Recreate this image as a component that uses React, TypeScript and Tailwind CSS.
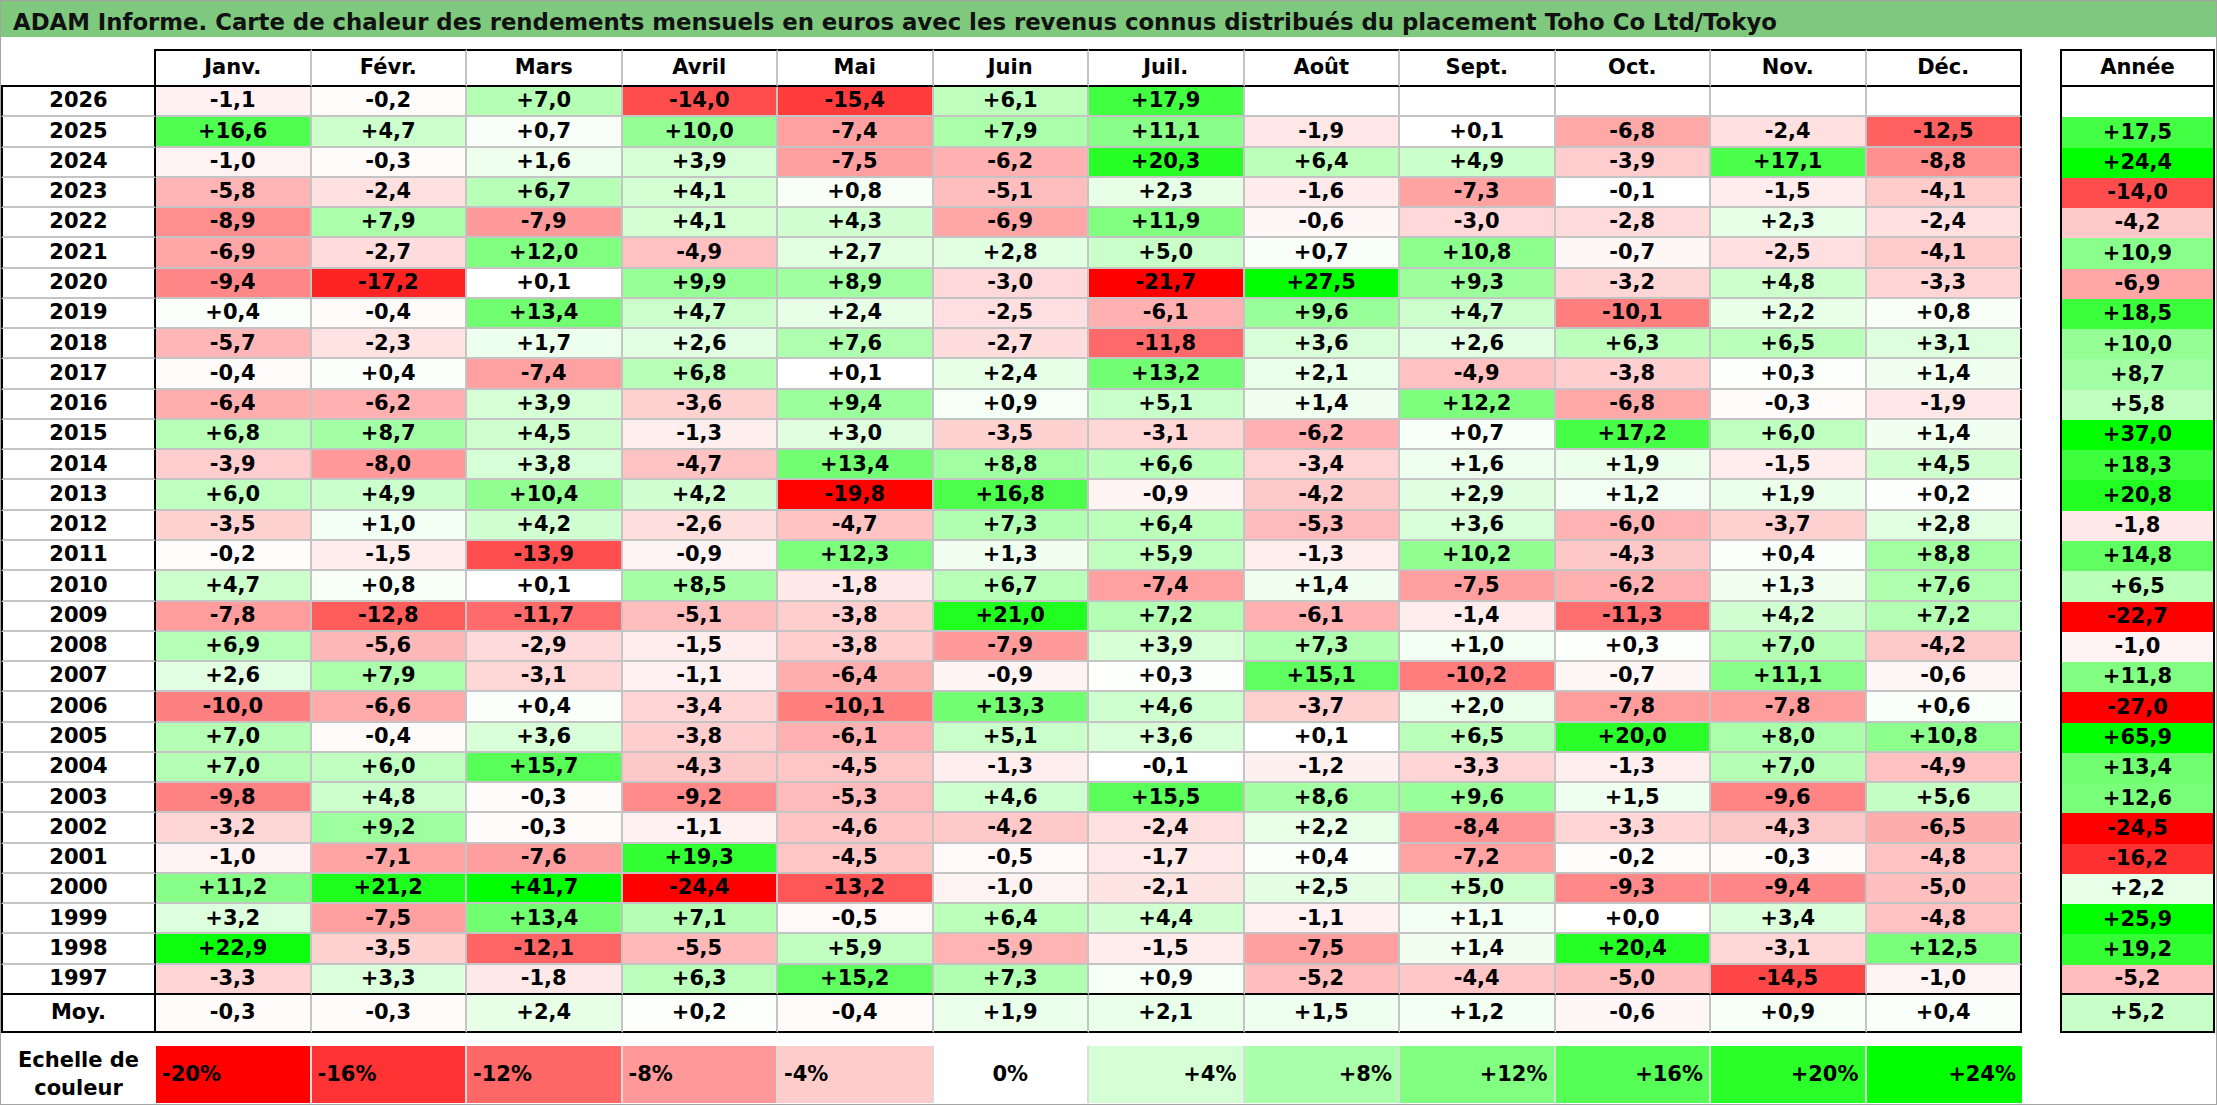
import React from 'react';

const MONTHS = ['Janv.', 'Févr.', 'Mars', 'Avril', 'Mai', 'Juin', 'Juil.', 'Août', 'Sept.', 'Oct.', 'Nov.', 'Déc.'];

// year, 12 monthly values, yearly total ("_" = no data yet)
const ROWS: string[] = [
  '2026 -1,1 -0,2 +7,0 -14,0 -15,4 +6,1 +17,9 _ _ _ _ _ _',
  '2025 +16,6 +4,7 +0,7 +10,0 -7,4 +7,9 +11,1 -1,9 +0,1 -6,8 -2,4 -12,5 +17,5',
  '2024 -1,0 -0,3 +1,6 +3,9 -7,5 -6,2 +20,3 +6,4 +4,9 -3,9 +17,1 -8,8 +24,4',
  '2023 -5,8 -2,4 +6,7 +4,1 +0,8 -5,1 +2,3 -1,6 -7,3 -0,1 -1,5 -4,1 -14,0',
  '2022 -8,9 +7,9 -7,9 +4,1 +4,3 -6,9 +11,9 -0,6 -3,0 -2,8 +2,3 -2,4 -4,2',
  '2021 -6,9 -2,7 +12,0 -4,9 +2,7 +2,8 +5,0 +0,7 +10,8 -0,7 -2,5 -4,1 +10,9',
  '2020 -9,4 -17,2 +0,1 +9,9 +8,9 -3,0 -21,7 +27,5 +9,3 -3,2 +4,8 -3,3 -6,9',
  '2019 +0,4 -0,4 +13,4 +4,7 +2,4 -2,5 -6,1 +9,6 +4,7 -10,1 +2,2 +0,8 +18,5',
  '2018 -5,7 -2,3 +1,7 +2,6 +7,6 -2,7 -11,8 +3,6 +2,6 +6,3 +6,5 +3,1 +10,0',
  '2017 -0,4 +0,4 -7,4 +6,8 +0,1 +2,4 +13,2 +2,1 -4,9 -3,8 +0,3 +1,4 +8,7',
  '2016 -6,4 -6,2 +3,9 -3,6 +9,4 +0,9 +5,1 +1,4 +12,2 -6,8 -0,3 -1,9 +5,8',
  '2015 +6,8 +8,7 +4,5 -1,3 +3,0 -3,5 -3,1 -6,2 +0,7 +17,2 +6,0 +1,4 +37,0',
  '2014 -3,9 -8,0 +3,8 -4,7 +13,4 +8,8 +6,6 -3,4 +1,6 +1,9 -1,5 +4,5 +18,3',
  '2013 +6,0 +4,9 +10,4 +4,2 -19,8 +16,8 -0,9 -4,2 +2,9 +1,2 +1,9 +0,2 +20,8',
  '2012 -3,5 +1,0 +4,2 -2,6 -4,7 +7,3 +6,4 -5,3 +3,6 -6,0 -3,7 +2,8 -1,8',
  '2011 -0,2 -1,5 -13,9 -0,9 +12,3 +1,3 +5,9 -1,3 +10,2 -4,3 +0,4 +8,8 +14,8',
  '2010 +4,7 +0,8 +0,1 +8,5 -1,8 +6,7 -7,4 +1,4 -7,5 -6,2 +1,3 +7,6 +6,5',
  '2009 -7,8 -12,8 -11,7 -5,1 -3,8 +21,0 +7,2 -6,1 -1,4 -11,3 +4,2 +7,2 -22,7',
  '2008 +6,9 -5,6 -2,9 -1,5 -3,8 -7,9 +3,9 +7,3 +1,0 +0,3 +7,0 -4,2 -1,0',
  '2007 +2,6 +7,9 -3,1 -1,1 -6,4 -0,9 +0,3 +15,1 -10,2 -0,7 +11,1 -0,6 +11,8',
  '2006 -10,0 -6,6 +0,4 -3,4 -10,1 +13,3 +4,6 -3,7 +2,0 -7,8 -7,8 +0,6 -27,0',
  '2005 +7,0 -0,4 +3,6 -3,8 -6,1 +5,1 +3,6 +0,1 +6,5 +20,0 +8,0 +10,8 +65,9',
  '2004 +7,0 +6,0 +15,7 -4,3 -4,5 -1,3 -0,1 -1,2 -3,3 -1,3 +7,0 -4,9 +13,4',
  '2003 -9,8 +4,8 -0,3 -9,2 -5,3 +4,6 +15,5 +8,6 +9,6 +1,5 -9,6 +5,6 +12,6',
  '2002 -3,2 +9,2 -0,3 -1,1 -4,6 -4,2 -2,4 +2,2 -8,4 -3,3 -4,3 -6,5 -24,5',
  '2001 -1,0 -7,1 -7,6 +19,3 -4,5 -0,5 -1,7 +0,4 -7,2 -0,2 -0,3 -4,8 -16,2',
  '2000 +11,2 +21,2 +41,7 -24,4 -13,2 -1,0 -2,1 +2,5 +5,0 -9,3 -9,4 -5,0 +2,2',
  '1999 +3,2 -7,5 +13,4 +7,1 -0,5 +6,4 +4,4 -1,1 +1,1 +0,0 +3,4 -4,8 +25,9',
  '1998 +22,9 -3,5 -12,1 -5,5 +5,9 -5,9 -1,5 -7,5 +1,4 +20,4 -3,1 +12,5 +19,2',
  '1997 -3,3 +3,3 -1,8 +6,3 +15,2 +7,3 +0,9 -5,2 -4,4 -5,0 -14,5 -1,0 -5,2',
];

const AVERAGE = '-0,3 -0,3 +2,4 +0,2 -0,4 +1,9 +2,1 +1,5 +1,2 -0,6 +0,9 +0,4 +5,2'.split(' ');

const SCALE = [-20, -16, -12, -8, -4, 0, 4, 8, 12, 16, 20, 24];

// Excel-like 3 colour scale: red at -20, white at 0, green at +24
const heat = (v: number | null) => {
  if (v === null) return '#ffffff';
  if (v < 0) {
    const c = Math.round(255 * (1 - Math.min(-v / 20, 1)));
    return `rgb(255,${c},${c})`;
  }
  const c = Math.round(255 * (1 - Math.min(v / 24, 1)));
  return `rgb(${c},255,${c})`;
};

const toNum = (s: string) => (s === '_' ? null : parseFloat(s.replace(',', '.')));

const data = ROWS.map((line) => {
  const [year, ...rest] = line.split(' ');
  return { year, months: rest.slice(0, 12), total: rest[12] };
});

const cellText = 'flex items-center justify-center text-[21px] font-bold';

const App: React.FC = () => {
  const lastIdx = data.length - 1;

  return (
    <div className="w-[2217px] h-[1105px] bg-white border border-[#a3a3a3] flex flex-col text-black font-['DejaVu_Sans',sans-serif]">
      <div className="h-[36px] shrink-0 bg-[#7fc97f] flex items-center pl-[12px] pt-[7px] text-[22.8px] font-bold text-[#111]">
        ADAM Informe. Carte de chaleur des rendements mensuels en euros avec les revenus connus distribués du placement Toho Co Ltd/Tokyo
      </div>

      <div className="mt-[12px] flex">
        {/* year column + months */}
        <div className="w-[2021px] grid grid-cols-[155px_repeat(12,minmax(0,1fr))] grid-rows-[38px_repeat(30,30.27px)_38px]">
          <div className="border-r-2 border-b-2 border-r-black border-b-black" />
          {MONTHS.map((m, i) => (
            <div
              key={m}
              className={`${cellText} border-t-2 border-b-2 border-r-2 border-t-black border-b-black ${
                i === 11 ? 'border-r-black' : 'border-r-[#c4c4c4]'
              }`}
            >
              {m}
            </div>
          ))}

          {data.map((row, r) => (
            <React.Fragment key={row.year}>
              <div
                className={`${cellText} border-l-2 border-r-2 border-b-2 border-l-black border-r-black ${
                  r === lastIdx ? 'border-b-black' : 'border-b-[#c4c4c4]'
                }`}
              >
                {row.year}
              </div>
              {row.months.map((v, i) => (
                <div
                  key={i}
                  style={{ backgroundColor: heat(toNum(v)) }}
                  className={`${cellText} border-r-2 border-b-2 ${i === 11 ? 'border-r-black' : 'border-r-[#c4c4c4]'} ${
                    r === lastIdx ? 'border-b-black' : 'border-b-[#c4c4c4]'
                  }`}
                >
                  {v === '_' ? '' : v}
                </div>
              ))}
            </React.Fragment>
          ))}

          <div className={`${cellText} border-l-2 border-r-2 border-b-2 border-black`}>Moy.</div>
          {AVERAGE.slice(0, 12).map((v, i) => (
            <div
              key={i}
              style={{ backgroundColor: heat(toNum(v)) }}
              className={`${cellText} border-r-2 border-b-2 border-b-black ${i === 11 ? 'border-r-black' : 'border-r-[#c4c4c4]'}`}
            >
              {v}
            </div>
          ))}
        </div>

        {/* yearly column */}
        <div className="ml-[38px] w-[155px] flex flex-col">
          <div className={`${cellText} h-[38px] border-2 border-black`}>Année</div>
          {data.map((row, r) => (
            <div
              key={row.year}
              style={{ backgroundColor: heat(toNum(row.total)) }}
              className={`${cellText} h-[30.27px] border-l-2 border-r-2 border-black ${r === lastIdx ? 'border-b-2' : ''}`}
            >
              {row.total === '_' ? '' : row.total}
            </div>
          ))}
          <div
            style={{ backgroundColor: heat(toNum(AVERAGE[12])) }}
            className={`${cellText} h-[38px] border-l-2 border-r-2 border-b-2 border-black`}
          >
            {AVERAGE[12]}
          </div>
        </div>
      </div>

      {/* colour scale legend */}
      <div className="mt-[13px] w-[2021px] h-[57px] grid grid-cols-[155px_repeat(12,minmax(0,1fr))]">
        <div className="flex flex-col items-center justify-center text-[21px] font-bold leading-[28px]">
          <span>Echelle de</span>
          <span>couleur</span>
        </div>
        {SCALE.map((s, i) => (
          <div
            key={s}
            style={{ backgroundColor: heat(s) }}
            className={`flex items-center text-[21px] font-bold ${
              s < 0 ? 'justify-start pl-[6px]' : s === 0 ? 'justify-center' : 'justify-end pr-[6px]'
            } ${i === 11 ? '' : 'border-r-2 border-r-[#dcdcdc]'}`}
          >
            {s > 0 ? `+${s}%` : `${s}%`}
          </div>
        ))}
      </div>
    </div>
  );
};

export default App;
